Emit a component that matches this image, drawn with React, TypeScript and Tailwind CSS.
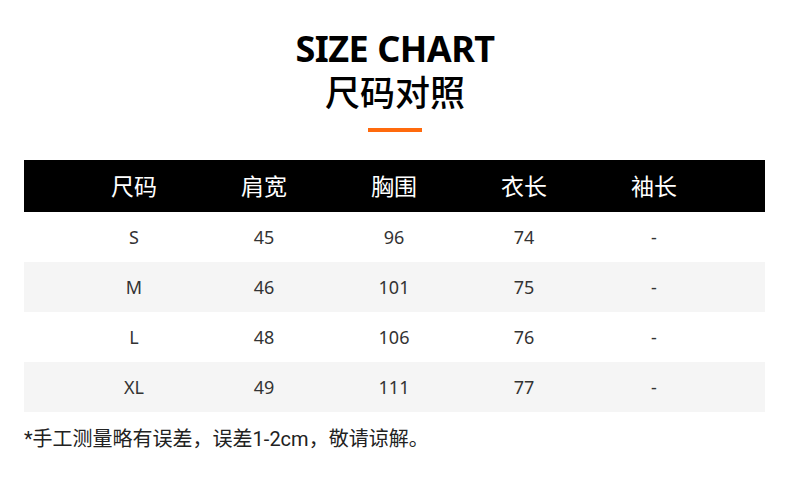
const rows = [
  ['S', '45', '96', '74', '-'],
  ['M', '46', '101', '75', '-'],
  ['L', '48', '106', '76', '-'],
  ['XL', '49', '111', '77', '-'],
];

const heads = ['尺码', '肩宽', '胸围', '衣长', '袖长'];

export default function App() {
  return (
    <div className="w-[790px] h-[482px] bg-white font-['Noto_Sans','Noto_Sans_CJK_SC',sans-serif] text-[#222]">
      {/* title */}
      <div className="flex flex-col items-center pt-[26px]">
        <h1 className="text-[36px] leading-[46px] font-bold text-black tracking-[-0.5px]">SIZE CHART</h1>
        <h2 className="text-[35px] leading-[42px] font-medium text-black">尺码对照</h2>
        <div className="mt-[14px] w-[54px] h-[4px] bg-[#ff6a0d]" />
      </div>

      {/* table */}
      <div className="mx-[24px] mt-[28px] w-[741px]">
        <div className="bg-black h-[52px] flex items-center pl-[45px]">
          {heads.map((h) => (
            <div key={h} className="w-[130px] text-center text-white text-[23px] font-normal">{h}</div>
          ))}
        </div>
        {rows.map((r, i) => (
          <div key={r[0]} className={`h-[50px] flex items-center pl-[45px] ${i % 2 === 1 ? 'bg-[#f5f5f5]' : 'bg-white'}`}>
            {r.map((c, j) => (
              <div key={j} className="w-[130px] text-center text-[18px] text-[#333]">{c}</div>
            ))}
          </div>
        ))}
      </div>

      <p className="mx-[24px] mt-[12px] text-[20px] text-[#222] font-['Roboto','Noto_Sans_CJK_SC',sans-serif]">*手工测量略有误差，误差1-2cm，敬请谅解。</p>
    </div>
  );
}
